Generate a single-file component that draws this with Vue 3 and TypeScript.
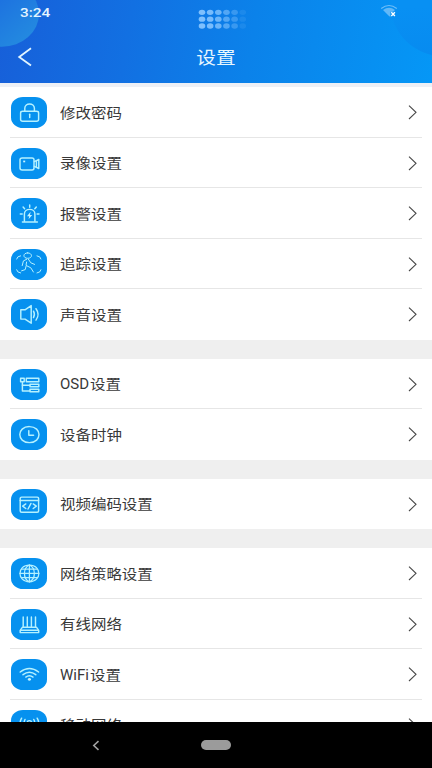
<template>
  <div class="screen">
    <header class="header">
      <svg class="header-bg" viewBox="0 0 432 83" preserveAspectRatio="none">
        <defs>
          <linearGradient id="orbLeft" x1="0" y1="0" x2="1" y2="1">
            <stop offset="0.3" stop-color="#1c6fe0" />
            <stop offset="1" stop-color="#2590e0" />
          </linearGradient>
          <linearGradient id="orbRight" x1="0" y1="0" x2="0" y2="1">
            <stop offset="0.5" stop-color="#0890f3" />
            <stop offset="1" stop-color="#078bf0" />
          </linearGradient>
        </defs>
        <ellipse cx="2" cy="14" rx="37" ry="33" fill="url(#orbLeft)" />
        <ellipse cx="445" cy="6" rx="54" ry="51" fill="url(#orbRight)" />
        <g fill="#8cc8ff">
          <template v-for="(opacity, col) in dotOpacity" :key="col">
            <ellipse
              v-for="row in 3"
              :key="row"
              :cx="202 + col * 8.15"
              :cy="5.5 + row * 6.9"
              rx="3.3"
              ry="2.7"
              :opacity="opacity"
            />
          </template>
        </g>
      </svg>
      <div class="status-bar">
        <span class="time">3:24</span>
        <svg class="signal" width="18" height="14" viewBox="0 0 18 14">
          <path d="M1.2 4.5Q9 -1.5 16.8 4.5" fill="none" stroke="#6dbdf8" stroke-width="1.1" />
          <path d="M3 6Q9 1.5 15 6L13 7.8H10.4V13L9 12Z" fill="#62b8f7" />
          <path d="M11.3 8.3l3.6 3.6M14.9 8.3l-3.6 3.6" stroke="#fff" stroke-width="1.4" />
        </svg>
      </div>
      <div class="title-bar">
        <button class="back-btn" aria-label="返回">
          <svg width="16" height="20" viewBox="0 0 16 20">
            <path d="M14 1.2L2.2 10L14 18.6" fill="none" stroke="#e2f5ff" stroke-width="1.8" />
          </svg>
        </button>
        <h1 class="title">设置</h1>
      </div>
    </header>

    <main class="list">
      <section v-for="(group, index) in groups" :key="index" class="group">
        <div v-for="item in group" :key="item.label" class="row">
          <span class="tile">
            <svg width="36" height="31" viewBox="0 0 36 31">
              <path v-for="(d, i) in item.paths" :key="i" :d="d" :stroke-width="item.stroke ?? 1.45" />
              <path v-if="item.fill" class="solid" :d="item.fill" />
            </svg>
          </span>
          <span class="label">
            <span v-if="item.prefix" class="latin">{{ item.prefix }}</span>
            <span class="cjk">{{ item.label }}</span>
          </span>
          <svg class="arrow" width="9" height="15" viewBox="0 0 9 15">
            <path d="M1 0.6L8 7.3L1 14" />
          </svg>
        </div>
      </section>
    </main>

    <nav class="nav-bar">
      <svg class="nav-back" width="8" height="11" viewBox="0 0 8 11">
        <path d="M6.5 1.2L1.8 5.5L6.5 9.8" fill="none" stroke="#a0a0a0" stroke-width="1.6" />
      </svg>
      <span class="nav-home"></span>
    </nav>
  </div>
</template>

<script setup lang="ts">
interface SettingItem {
  label: string
  prefix?: string
  paths: string[]
  fill?: string
  stroke?: number
}

const dotOpacity = [0.9, 0.85, 0.75, 0.55, 0.35, 0.13]

const groups: SettingItem[][] = [
  [
    {
      label: '修改密码',
      paths: [
        'M11.7 14.3H25.5Q27.6 14.3 27.6 16V22.5Q27.6 24.2 25.5 24.2H11.7Q9.6 24.2 9.6 22.5V16Q9.6 14.3 11.7 14.3Z',
        'M13.8 14V11.2C13.8 5.5 23.4 5.5 23.4 11.2V14',
        'M18.7 17.3V20.6',
      ],
    },
    {
      label: '录像设置',
      paths: [
        'M11.2 9.9H21Q23 9.9 23 11.8V20Q23 21.9 21 21.9H11.2Q9 21.9 9 20V11.8Q9 9.9 11.2 9.9Z',
        'M23.4 13.6L27.8 11.4V20.5L23.4 18.3',
        'M25.4 12.8V19.2',
      ],
      fill: 'M12.2 12.6h2v1.7h-2z',
    },
    {
      label: '报警设置',
      paths: [
        'M13.4 23.2V16C13.4 9.8 23.9 9.8 23.9 16V23.2',
        'M11.4 23.9H26.4',
        'M18.7 7V9.2M12.1 9L13.6 10.8M25.3 9L23.8 10.8M9.3 16H11.2M26.1 16H28',
      ],
      fill: 'M19.6 13.8L16 18.3H18.2L17.6 21.3L21.2 17H19Z',
    },
    {
      label: '追踪设置',
      stroke: 1,
      paths: [
        'M5.6 10Q6 7.2 9.6 6.8M26 6.8Q29.6 7.2 30 10M5.6 20.8Q6 23.6 9.6 24M26 24Q29.6 23.6 30 20.8',
        'M16.7 3.9C21.8 3.9 21.8 9.3 16.7 9.3C11.6 9.3 11.6 3.9 16.7 3.9Z',
        'M15.8 10.2L12.4 11.9L11.2 16.6',
        'M17.4 10.2L19.8 13.8L23.6 15.4',
        'M15.6 13L15 16.4L19.8 18.8L22.4 23',
        'M15 17.4L14.2 20.6L10.6 21.8',
      ],
    },
    {
      label: '声音设置',
      paths: [
        'M9.8 10.8H14L20.2 6.6V24.2L14 20.1H9.8Z',
        'M22.5 12.2Q24.3 15.4 22.5 18.6',
        'M25 9.7Q29.2 15.4 25 21.1',
      ],
    },
  ],
  [
    {
      prefix: 'OSD',
      label: '设置',
      paths: [
        'M9.6 9.3H13.2V12.7H9.6Z',
        'M15.3 9.3H27.8V12.7H15.3Z',
        'M11.4 13V22H18.8',
        'M11.4 16.2H18.8',
        'M19 15.2H27.8V17.8H19Z',
        'M19 20.2H27.8V22.8H19Z',
      ],
    },
    {
      label: '设备时钟',
      paths: [
        'M18.4 7.6C31.2 7.6 31.2 23.6 18.4 23.6C5.6 23.6 5.6 7.6 18.4 7.6Z',
        'M17.8 11.6V16.2H22.6',
      ],
    },
  ],
  [
    {
      label: '视频编码设置',
      paths: [
        'M10.6 8.1H26.2Q27.6 8.1 27.6 9.3V22Q27.6 23.2 26.2 23.2H10.6Q9.2 23.2 9.2 22V9.3Q9.2 8.1 10.6 8.1Z',
        'M9.2 11.4H27.6',
        'M14.8 14.9L11.7 17.2L14.8 19.5M22.2 14.9L25.3 17.2L22.2 19.5M20 14.4L17 20',
      ],
    },
  ],
  [
    {
      label: '网络策略设置',
      stroke: 1.25,
      paths: [
        'M18.4 7C31 7 31 23.8 18.4 23.8C5.8 23.8 5.8 7 18.4 7Z',
        'M18.4 7C11.8 10 11.8 20.8 18.4 23.8C25 20.8 25 10 18.4 7Z',
        'M18.4 7V23.8M9 15.4H27.8M10.6 11.2H26.2M10.6 19.6H26.2',
      ],
    },
    {
      label: '有线网络',
      paths: [
        'M11.5 18.2H25.4L27.7 21.4V23.6H9.2V21.4Z',
        'M9.6 21.2H27.3',
        'M12.2 8V17.6M16.3 8V17.6M20.4 8V17.6M24.5 8V17.6',
      ],
    },
    {
      prefix: 'WiFi',
      label: '设置',
      paths: [
        'M9.2 13Q18.4 5.8 27.6 13',
        'M12 15.7Q18.4 10.8 24.8 15.7',
        'M14.8 18.1Q18.4 15.4 22 18.1',
      ],
      fill: 'M18.4 19a1.7 1.4 0 1 0 .01 0z',
    },
    {
      label: '移动网络',
      paths: [
        'M10.6 8.2Q7.6 13.5 10.6 18.5M14 9.5Q12 13.5 14 17M26.2 8.2Q29.2 13.5 26.2 18.5M22.8 9.5Q24.8 13.5 22.8 17',
        'M18.4 10.6C21.3 10.6 21.3 14.6 18.4 14.6C15.5 14.6 15.5 10.6 18.4 10.6ZM18.4 14.6V24',
      ],
    },
  ],
]
</script>

<style>
body {
  margin: 0;
  overflow: hidden;
}
</style>

<style scoped>
.screen {
  width: 432px;
  height: 768px;
  display: flex;
  flex-direction: column;
  overflow: hidden;
  background: #efefef;
  font-family: 'Noto Sans', 'Noto Sans CJK SC', sans-serif;
}

.header {
  position: relative;
  flex: none;
  height: 82.5px;
  background: linear-gradient(100deg, #175fd9 0%, #1270e2 30%, #0b82ea 58%, #0597f6 100%);
}

.header-bg {
  position: absolute;
  inset: 0;
  width: 100%;
  height: 100%;
}

.status-bar {
  position: relative;
  display: flex;
  justify-content: space-between;
  height: 32px;
  padding: 4px 34px 0 20px;
  box-sizing: border-box;
}

.time {
  color: #e4f4ff;
  font-family: Roboto, sans-serif;
  font-size: 13.5px;
  font-weight: 500;
  line-height: 17px;
  transform: scaleX(1.14);
  transform-origin: left center;
}

.title-bar {
  position: relative;
  display: grid;
  grid-template-columns: 50px 1fr 50px;
  align-items: center;
  height: 50px;
}

.back-btn {
  display: flex;
  padding: 0 0 0 17px;
  border: none;
  background: none;
}

.title {
  margin: 0 0 1px;
  color: #e8f7ff;
  font-family: 'Noto Sans CJK SC', sans-serif;
  font-size: 17px;
  font-weight: 400;
  line-height: 24px;
  text-align: center;
  transform: scaleX(1.155);
}

.list {
  flex: 1;
  min-height: 0;
  display: flex;
  flex-direction: column;
  gap: 19px;
  padding-top: 4.9px;
  overflow: hidden;
  background: linear-gradient(#edf0f6 5px, #efefef 5px);
}

.group {
  flex: none;
  background: #fff;
}

.row {
  display: flex;
  align-items: center;
  height: 50.5px;
  padding: 0 15px 0 11px;
  background: linear-gradient(#e6e6e6, #e6e6e6) 10px 100% / 412px 1px no-repeat;
  box-sizing: border-box;
}

.row:last-child {
  background: none;
}

.tile {
  width: 36px;
  height: 31px;
  flex: none;
  border-radius: 12px / 10.5px;
  background: #0691ef;
}

.tile svg {
  display: block;
}

.tile path {
  fill: none;
  stroke: #b5f1ff;
  stroke-linecap: round;
  stroke-linejoin: round;
}

.tile .solid {
  fill: #c8f5ff;
  stroke: none;
}

.label {
  flex: 1;
  display: flex;
  align-items: center;
  margin-left: 13px;
  color: #383838;
  line-height: 20px;
  white-space: nowrap;
}

.latin {
  width: 30px;
  font-family: Roboto, sans-serif;
  font-size: 15px;
}

.cjk {
  margin-bottom: 2px;
  font-family: 'Noto Sans CJK SC', sans-serif;
  font-size: 13.4px;
  transform: scaleX(1.155);
  transform-origin: left center;
}

.arrow path {
  fill: none;
  stroke: #484848;
  stroke-width: 1.1;
}

.nav-bar {
  position: relative;
  flex: none;
  display: grid;
  grid-template-columns: 201px 30px 1fr;
  align-items: center;
  height: 46px;
  background: #000;
}

.nav-back {
  margin-left: 92px;
}

.nav-home {
  height: 10px;
  border-radius: 5px;
  background: #9b9b9b;
}
</style>
